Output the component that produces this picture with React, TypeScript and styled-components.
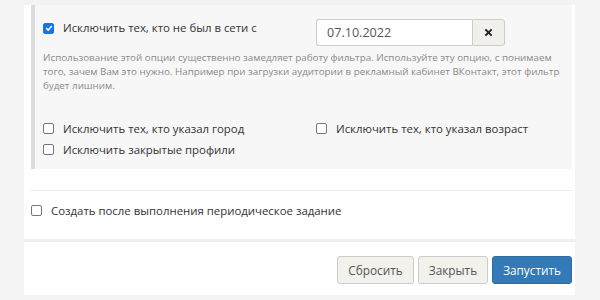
import styled, { createGlobalStyle } from "styled-components";

const GlobalStyle = createGlobalStyle`
  html, body {
    margin: 0;
    padding: 0;
    background: #f3f3f3;
    font-family: "Open Sans", "Noto Sans", sans-serif;
    color: #333;
  }
`;

const Page = styled.div`
  padding: 5px 25px 5px 24px;
  height: 290px;
`;

const Panel = styled.div`
  background: #fff;
  height: 290px;
  display: flex;
  flex-direction: column;
`;

const Body = styled.div`
  padding: 0 3px 0 7px;
`;

const FilterBox = styled.div`
  background: #f7f7f7;
  border-left: 4px solid #dcdcdc;
  height: 164px;
  padding: 14px 0 0 8px;
  box-sizing: border-box;
`;

const TopRow = styled.div`
  display: grid;
  grid-template-columns: 273px 1fr;
  align-items: start;
`;

const Label = styled.label<{ tight?: boolean }>`
  display: flex;
  align-items: center;
  gap: 9px;
  font-size: 11.4px;
  line-height: ${({ tight }) => (tight ? "18px" : "21px")};
  color: #333;
  white-space: nowrap;
`;

const Box = styled.span<{ checked?: boolean }>`
  width: 9px;
  height: 9px;
  flex: none;
  border-radius: 2px;
  border: 1px solid ${({ checked }) => (checked ? "#1a73e8" : "#767676")};
  background: ${({ checked }) => (checked ? "#1a73e8" : "#fff")};
  display: flex;
  align-items: center;
  justify-content: center;
`;

const DateGroup = styled.div`
  display: flex;
  height: 27px;
`;

const DateInput = styled.div`
  width: 156px;
  box-sizing: border-box;
  border: 1px solid #ccc;
  border-right: none;
  border-radius: 3px 0 0 3px;
  background: #fff;
  font-size: 12.6px;
  color: #555;
  display: flex;
  align-items: center;
  padding-left: 10px;
`;

const ClearButton = styled.div`
  width: 33px;
  box-sizing: border-box;
  border: 1px solid #ccc;
  border-radius: 0 3px 3px 0;
  background: #f0efec;
  display: flex;
  align-items: center;
  justify-content: center;
`;

const Hint = styled.p`
  margin: 5px 0 0;
  font-size: 9.8px;
  line-height: 14px;
  color: #8a8a8a;
  padding-right: 10px;
`;

const OptionGrid = styled.div`
  display: grid;
  grid-template-columns: 273px 1fr;
  margin-top: 25px;
`;

const Divider = styled.div`
  height: 1px;
  background: #ececec;
  margin-top: 21px;
`;

const PeriodicRow = styled.div`
  padding-top: 9px;
`;

const Footer = styled.div`
  margin-top: auto;
  border-top: 3px solid #f0f0f0;
  height: 56px;
  box-sizing: border-box;
  padding: 0 3px 0 0;
  display: flex;
  align-items: center;
  justify-content: flex-end;
  gap: 4px;
`;

const Button = styled.button<{ primary?: boolean }>`
  height: 28px;
  margin-top: 2px;
  padding: 0 10px;
  font-family: inherit;
  font-size: 11.8px;
  border-radius: 3px;
  border: 1px solid ${({ primary }) => (primary ? "#2e6da4" : "#ccc")};
  background: ${({ primary }) => (primary ? "#337ab7" : "#f3f1ec")};
  color: ${({ primary }) => (primary ? "#fff" : "#555")};
`;

const Check = ({ checked }: { checked?: boolean }) => (
  <Box checked={checked}>
    {checked && (
      <svg width="8" height="8" viewBox="0 0 10 10">
        <path d="M1.6 5.2 L4 7.5 L8.5 2.4" fill="none" stroke="#fff" strokeWidth="2" />
      </svg>
    )}
  </Box>
);

export default function App() {
  return (
    <>
      <GlobalStyle />
      <Page>
        <Panel>
          <Body>
            <FilterBox>
              <TopRow>
                <Label tight>
                  <Check checked />
                  Исключить тех, кто не был в сети с
                </Label>
                <DateGroup>
                  <DateInput>07.10.2022</DateInput>
                  <ClearButton>
                    <svg width="9" height="9" viewBox="0 0 10 10">
                      <path d="M1.5 1.5 L8.5 8.5 M8.5 1.5 L1.5 8.5" stroke="#222" strokeWidth="2.2" />
                    </svg>
                  </ClearButton>
                </DateGroup>
              </TopRow>
              <Hint>
                Использование этой опции существенно замедляет работу фильтра. Используйте эту опцию, с понимаем
                того, зачем Вам это нужно. Например при загрузки аудитории в рекламный кабинет ВКонтакт, этот фильтр
                будет лишним.
              </Hint>
              <OptionGrid>
                <Label>
                  <Check />
                  Исключить тех, кто указал город
                </Label>
                <Label>
                  <Check />
                  Исключить тех, кто указал возраст
                </Label>
                <Label>
                  <Check />
                  Исключить закрытые профили
                </Label>
              </OptionGrid>
            </FilterBox>
            <Divider />
            <PeriodicRow>
              <Label>
                <Check />
                Создать после выполнения периодическое задание
              </Label>
            </PeriodicRow>
          </Body>
          <Footer>
            <Button>Сбросить</Button>
            <Button>Закрыть</Button>
            <Button primary>Запустить</Button>
          </Footer>
        </Panel>
      </Page>
    </>
  );
}
